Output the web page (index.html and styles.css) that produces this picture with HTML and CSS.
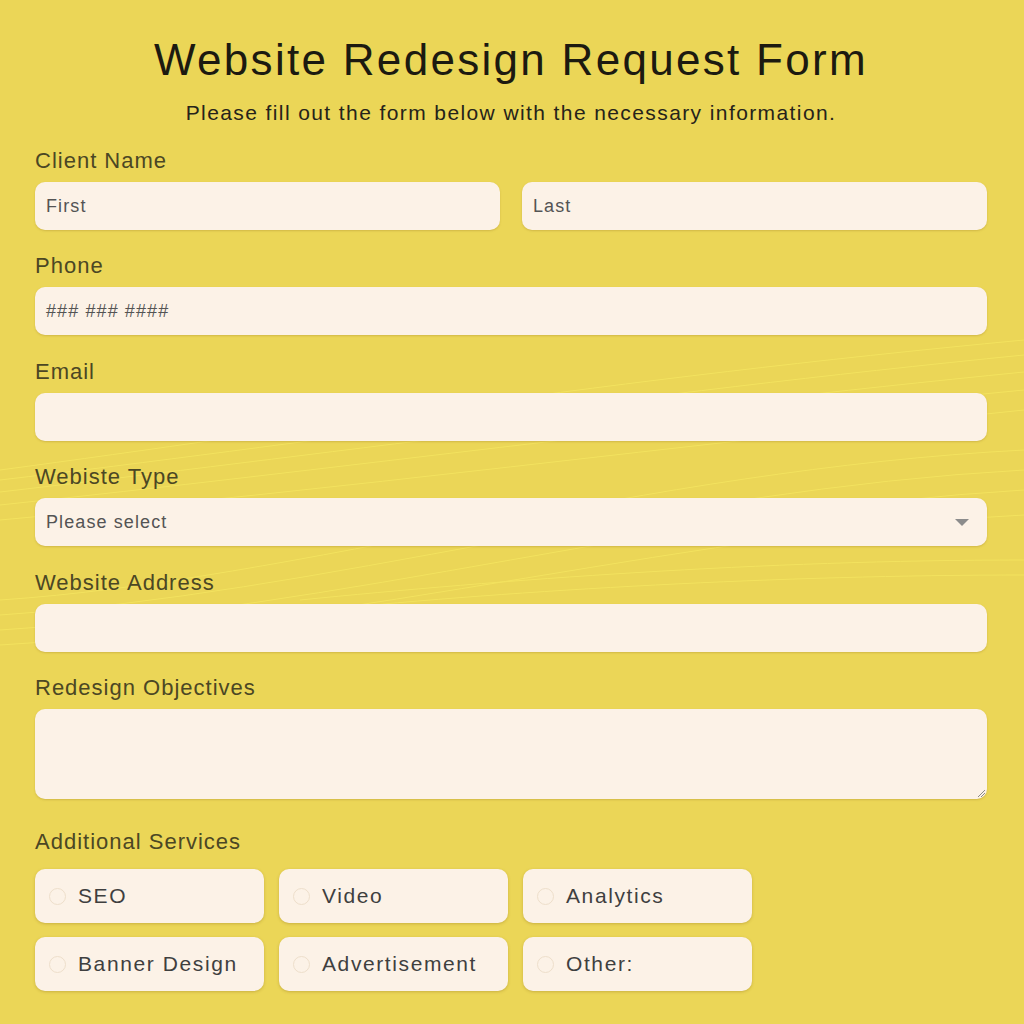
FILE: index.html
```html
<!DOCTYPE html>
<html lang="en">
<head>
<meta charset="utf-8">
<title>Website Redesign Request Form</title>
<link rel="stylesheet" href="styles.css">
</head>
<body>
<svg class="waves" width="1024" height="1024" viewBox="0 0 1024 1024" aria-hidden="true">
  <g fill="none" stroke="#f7e862" stroke-width="1" opacity="0.7">
    <path d="M0 470 C300 430 600 380 1024 340"/>
    <path d="M0 480 C300 445 620 395 1024 355"/>
    <path d="M0 492 C320 455 640 410 1024 372"/>
    <path d="M0 505 C330 470 660 425 1024 390"/>
    <path d="M0 520 C340 490 680 445 1024 410"/>
    <path d="M0 600 C300 580 640 470 1024 450"/>
    <path d="M0 615 C320 595 660 490 1024 470"/>
    <path d="M0 630 C340 610 680 510 1024 490"/>
    <path d="M0 645 C360 625 700 530 1024 515"/>
    <path d="M300 600 C500 580 760 560 1024 560"/>
    <path d="M320 610 C520 590 780 575 1024 575"/>
  </g>
</svg>
<main class="form">
  <h1 class="title">Website Redesign Request Form</h1>
  <p class="subtitle">Please fill out the form below with the necessary information.</p>

  <div class="field first">
    <label class="label">Client Name</label>
    <div class="row2">
      <div class="input"><span class="ph">First</span></div>
      <div class="input"><span class="ph">Last</span></div>
    </div>
  </div>

  <div class="field">
    <label class="label">Phone</label>
    <div class="input"><span class="ph">### ### ####</span></div>
  </div>

  <div class="field">
    <label class="label">Email</label>
    <div class="input"></div>
  </div>

  <div class="field">
    <label class="label">Webiste Type</label>
    <div class="input select"><span class="ph">Please select</span><span class="caret"></span></div>
  </div>

  <div class="field">
    <label class="label">Website Address</label>
    <div class="input"></div>
  </div>

  <div class="field">
    <label class="label">Redesign Objectives</label>
    <div class="input textarea">
      <svg class="grip" width="10" height="10" viewBox="0 0 10 10"><path d="M9 2 L2 9 M9 5 L5 9" stroke="#8a8a8a" stroke-width="1"/></svg>
    </div>
  </div>

  <div class="field services">
    <label class="label">Additional Services</label>
    <div class="options">
      <div class="opt"><span class="radio"></span>SEO</div>
      <div class="opt"><span class="radio"></span>Video</div>
      <div class="opt"><span class="radio"></span>Analytics</div>
      <div class="opt"><span class="radio"></span>Banner Design</div>
      <div class="opt"><span class="radio"></span>Advertisement</div>
      <div class="opt"><span class="radio"></span>Other:</div>
    </div>
  </div>
</main>
</body>
</html>
```
FILE: styles.css
```css
html, body {
  margin: 0;
  padding: 0;
  background: #ebd657;
}
body {
  position: relative;
  font-family: "Liberation Sans", Arial, sans-serif;
  min-height: 1024px;
  overflow: hidden;
}
.waves {
  position: absolute;
  left: 0;
  top: 0;
  pointer-events: none;
}
.form {
  position: relative;
  padding: 36px 37px 0 35px;
  display: flex;
  flex-direction: column;
}
.title {
  margin: 0;
  text-align: center;
  font-weight: 400;
  font-size: 44px;
  line-height: 48px;
  letter-spacing: 2.3px;
  color: #1c1a10;
}
.subtitle {
  margin: 17px 0 0;
  text-align: center;
  font-size: 21px;
  line-height: 24px;
  letter-spacing: 1.4px;
  color: #25231a;
}
.field {
  display: flex;
  flex-direction: column;
  margin-top: 24.4px;
}
.field.first {
  margin-top: 24px;
}
.label {
  font-size: 22px;
  line-height: 24px;
  letter-spacing: 1px;
  color: #4b4724;
  margin-bottom: 9px;
}
.row2 {
  display: grid;
  grid-template-columns: 1fr 1fr;
  gap: 22px;
}
.input {
  height: 48px;
  box-sizing: border-box;
  background: #fcf2e7;
  border-radius: 10px;
  box-shadow: 0 1px 2px rgba(160, 130, 40, 0.35);
  display: flex;
  align-items: center;
  padding: 0 11px;
  position: relative;
}
.ph {
  font-size: 18px;
  letter-spacing: 1.1px;
  color: #545454;
}
.select .caret {
  position: absolute;
  right: 18px;
  top: 21px;
  width: 0;
  height: 0;
  border-left: 7px solid transparent;
  border-right: 7px solid transparent;
  border-top: 7px solid #8c8c8c;
}
.textarea {
  height: 90px;
}
.grip {
  position: absolute;
  right: 1px;
  bottom: 1px;
}
.field.services {
  margin-top: 31px;
}
.field.services .label {
  margin-bottom: 15px;
}
.options {
  display: grid;
  grid-template-columns: repeat(3, 229px);
  column-gap: 15px;
  row-gap: 14px;
}
.opt {
  height: 54px;
  box-sizing: border-box;
  background: #fcf2e7;
  border-radius: 10px;
  box-shadow: 0 1px 3px rgba(160, 130, 40, 0.45);
  display: flex;
  align-items: center;
  padding: 0 0 0 14px;
  font-size: 21px;
  letter-spacing: 1.6px;
  color: #3f3f3f;
}
.radio {
  width: 17px;
  height: 17px;
  box-sizing: border-box;
  border: 1px solid #eedfcb;
  border-radius: 50%;
  margin-right: 12px;
  margin-bottom: -2px;
}
```
